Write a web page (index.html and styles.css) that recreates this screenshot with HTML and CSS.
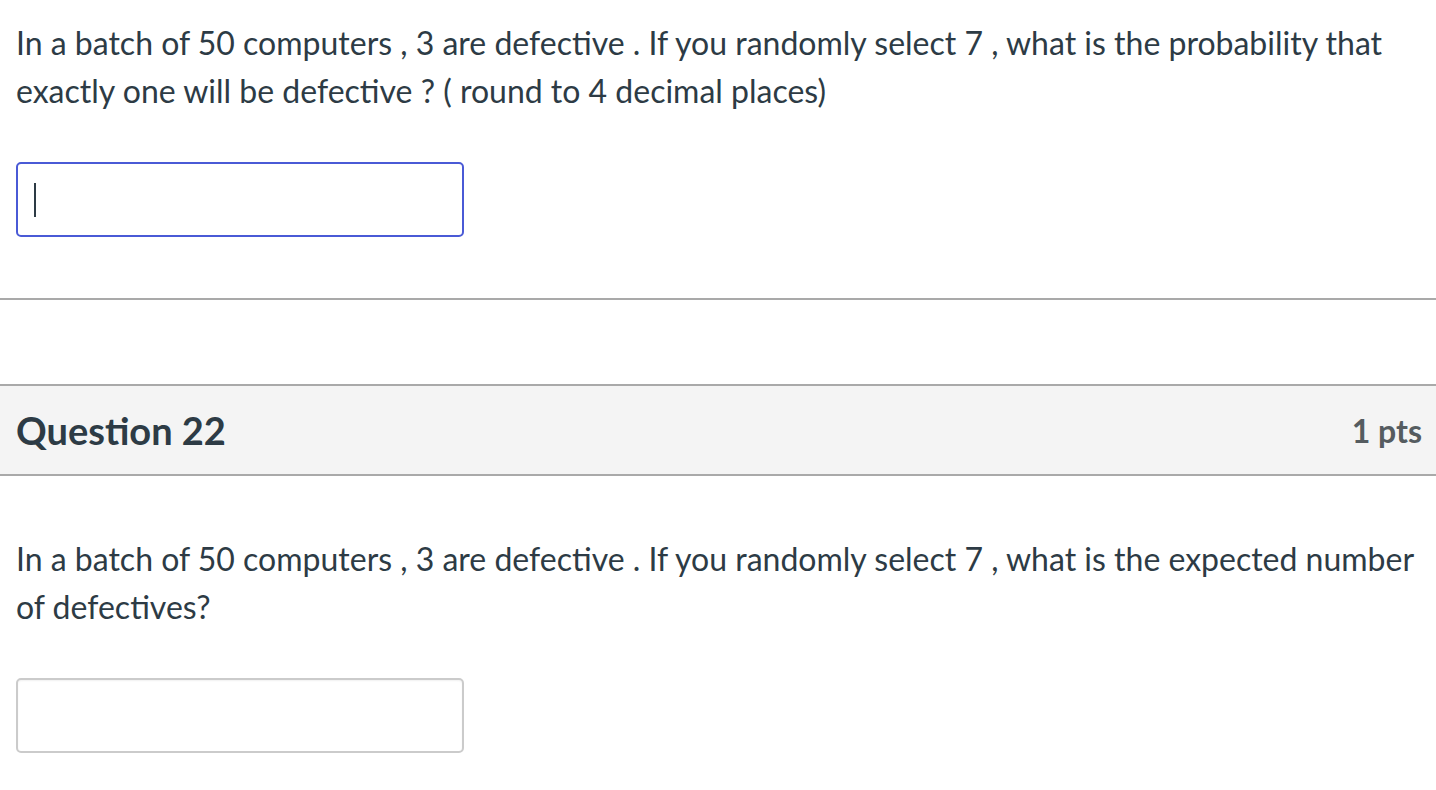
FILE: index.html
```html
<!DOCTYPE html>
<html>
<head>
<meta charset="utf-8">
<link rel="stylesheet" href="styles.css">
</head>
<body>
<div class="question">
  <p class="qtext">In a batch of 50 computers , 3 are defective . If you randomly select 7 , what is the probability that exactly one will be defective ? ( round to 4 decimal places)</p>
  <div class="answer focused"><span class="caret"></span></div>
</div>
<hr class="divider">
<div class="qheader">
  <h2 class="qtitle">Question 22</h2>
  <span class="pts">1 pts</span>
</div>
<div class="question second">
  <p class="qtext">In a batch of 50 computers , 3 are defective . If you randomly select 7 , what is the expected number of defectives?</p>
  <div class="answer"></div>
</div>
</body>
</html>
```
FILE: styles.css
```css
html, body {
  margin: 0;
  padding: 0;
  background: #ffffff;
}
body {
  font-family: Lato, "Open Sans", sans-serif;
  color: #2d3b45;
  width: 1436px;
}
.question {
  padding: 19px 16px 0 16px;
}
.question.second {
  padding-top: 59px;
}
.qtext {
  margin: 0;
  font-size: 32px;
  line-height: 48px;
}
.answer {
  margin-top: 47px;
  width: 448px;
  height: 75px;
  box-sizing: border-box;
  border: 2px solid #cbcbcb;
  border-radius: 5px;
  background: #fff;
  box-shadow: inset 0 1px 2px rgba(0, 0, 0, 0.06);
  display: flex;
  align-items: center;
  padding-left: 16px;
}
.answer.focused {
  border: 2px solid #4a5ad6;
  box-shadow: none;
}
.caret {
  display: block;
  width: 2px;
  height: 34px;
  background: #2d3b45;
}
.divider {
  margin: 61px 0 0 0;
  border: 0;
  border-top: 2px solid #a9a9a9;
  height: 0;
}
.qheader {
  margin-top: 84px;
  height: 92px;
  box-sizing: border-box;
  background: #f4f4f4;
  border-top: 2px solid #a9a9a9;
  border-bottom: 2px solid #a9a9a9;
  display: flex;
  align-items: center;
  justify-content: space-between;
  padding: 0 14px 0 16px;
}
.qtitle {
  margin: 0;
  font-size: 38px;
  font-weight: 700;
  color: #2d3b45;
}
.pts {
  font-size: 32px;
  font-weight: 700;
  color: #555c60;
}
```
